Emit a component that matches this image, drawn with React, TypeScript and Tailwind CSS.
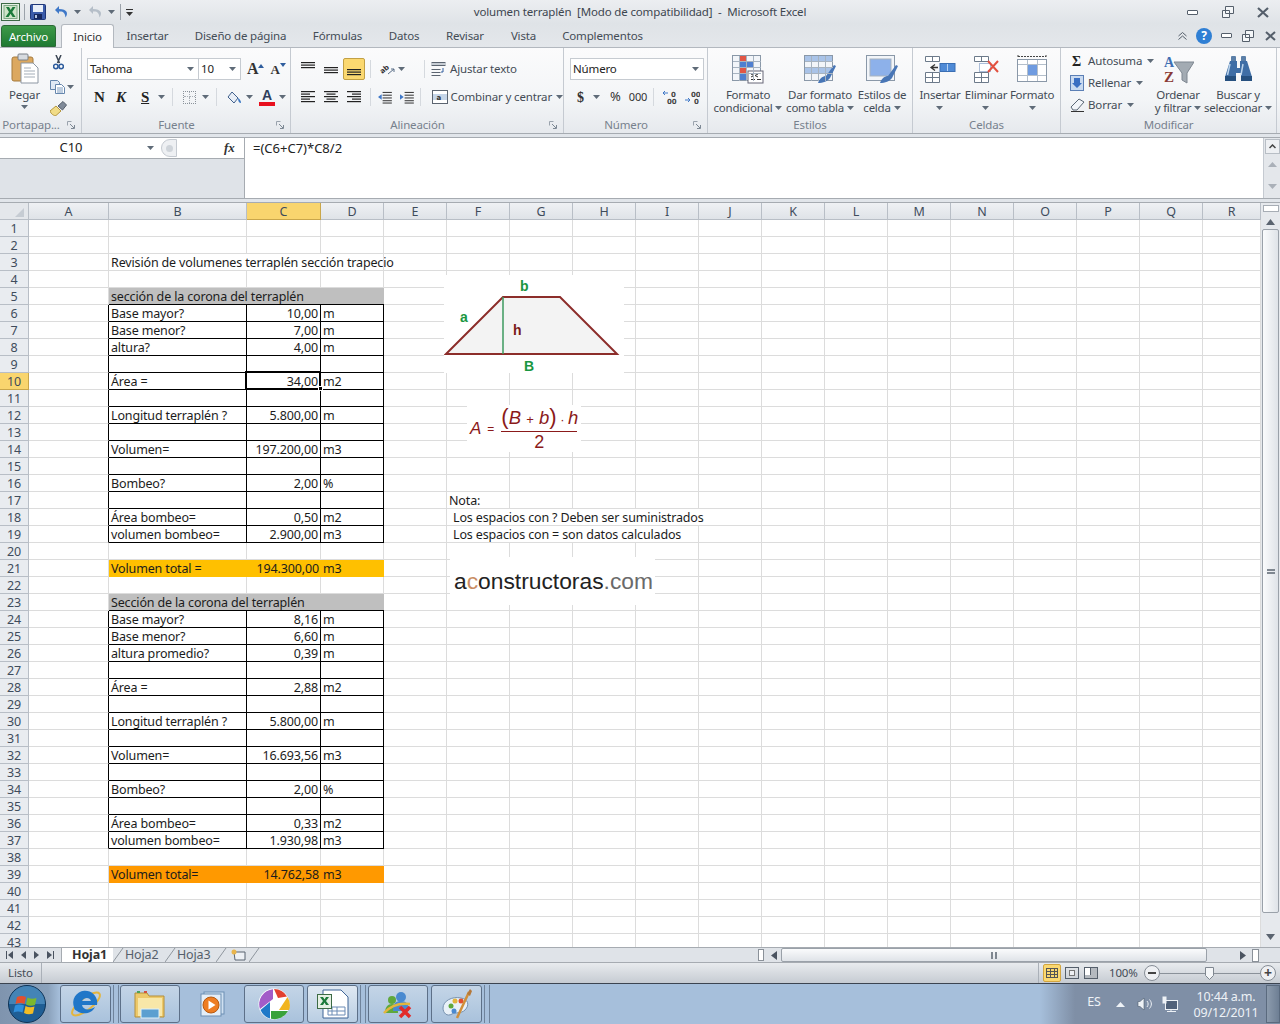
import type { ReactNode } from 'react'

const ui = 'font-["Noto_Sans",sans-serif] tracking-[-0.15px]'

const columns = ['A', 'B', 'C', 'D', 'E', 'F', 'G', 'H', 'I', 'J', 'K', 'L', 'M', 'N', 'O', 'P', 'Q', 'R']
const gridCols = 'grid grid-rows-[17px] grid-cols-[29px_80px_138px_74px_63px_63px_63px_63px_63px_63px_63px_63px_63px_63px_63px_63px_63px_63px_58px]'

type RowData = { b?: string; c?: string; d?: string }

const sheetData: Record<number, RowData> = {
  5: { b: 'sección de la corona del terraplén' },
  6: { b: 'Base mayor?', c: '10,00', d: 'm' },
  7: { b: 'Base menor?', c: '7,00', d: 'm' },
  8: { b: 'altura?', c: '4,00', d: 'm' },
  10: { b: 'Área =', c: '34,00', d: 'm2' },
  12: { b: 'Longitud terraplén ?', c: '5.800,00', d: 'm' },
  14: { b: 'Volumen=', c: '197.200,00', d: 'm3' },
  16: { b: 'Bombeo?', c: '2,00', d: '%' },
  18: { b: 'Área bombeo=', c: '0,50', d: 'm2' },
  19: { b: 'volumen bombeo=', c: '2.900,00', d: 'm3' },
  21: { b: 'Volumen total =', c: '194.300,00', d: 'm3' },
  23: { b: 'Sección de la corona del terraplén' },
  24: { b: 'Base mayor?', c: '8,16', d: 'm' },
  25: { b: 'Base menor?', c: '6,60', d: 'm' },
  26: { b: 'altura promedio?', c: '0,39', d: 'm' },
  28: { b: 'Área =', c: '2,88', d: 'm2' },
  30: { b: 'Longitud terraplén ?', c: '5.800,00', d: 'm' },
  32: { b: 'Volumen=', c: '16.693,56', d: 'm3' },
  34: { b: 'Bombeo?', c: '2,00', d: '%' },
  36: { b: 'Área bombeo=', c: '0,33', d: 'm2' },
  37: { b: 'volumen bombeo=', c: '1.930,98', d: 'm3' },
  39: { b: 'Volumen total=', c: '14.762,58', d: 'm3' },
}

const notes: Record<number, { text: string; span: string[] }> = {
  3: { text: 'Revisión de volumenes terraplén sección trapecio', span: ['B', 'C', 'D'] },
  17: { text: 'Nota:', span: [] },
  18: { text: 'Los espacios con ? Deben ser suministrados', span: ['F', 'G', 'H', 'I'] },
  19: { text: 'Los espacios con = son datos calculados', span: ['F', 'G', 'H'] },
}

function Caret({ className = '' }: { className?: string }) {
  return (
    <svg width="7" height="4" viewBox="0 0 7 4" className={`shrink-0 ${className}`}>
      <path d="M0 0h7L3.500 4z" fill="#5f6b78" />
    </svg>
  )
}

function Launcher() {
  return (
    <svg width="9" height="9" viewBox="0 0 9 9" className="absolute right-[5px] bottom-[3px]">
      <path d="M0.500 0.500h4M0.500 0.500v4" stroke="#9aa3ad" fill="none" />
      <path d="M3 3l4 4M7.500 4v3.500H4" stroke="#7d8894" fill="none" />
    </svg>
  )
}

function Group({ className, label, launcher, children }: { className: string; label: string; launcher?: boolean; children: ReactNode }) {
  return (
    <div className={`${className} relative h-full shrink-0 flex flex-col border-r border-[#c5cad1]`}>
      <div className="h-[70px] shrink-0 relative">{children}</div>
      <div className={`h-[15px] leading-[13px] text-center text-[11.5px] text-[#77818d] whitespace-nowrap ${launcher ? 'pr-[19px]' : ''}`}>{label}</div>
      {launcher && <Launcher />}
    </div>
  )
}

function BigButton({ className, lines, icon, caretInline }: { className: string; lines: string[]; icon: ReactNode; caretInline?: boolean }) {
  return (
    <div className={`${className} flex flex-col items-center pt-[7px]`}>
      <div className="h-[28px] flex items-center justify-center">{icon}</div>
      <div className="mt-[5px] text-[11.5px] tracking-[-0.25px] leading-[13px] text-center text-[#444c56] whitespace-nowrap">
        <div>{lines[0]}</div>
        {caretInline ? (
          <div className="flex items-center justify-center gap-[3px]">
            {lines[1]}
            <Caret />
          </div>
        ) : (
          <div className="h-[13px] flex items-center justify-center"><Caret /></div>
        )}
      </div>
    </div>
  )
}

function AlignIcon({ top, widths, align }: { top?: number; widths: number[]; align: 'l' | 'c' | 'r' }) {
  return (
    <svg width="14" height="12" viewBox="0 0 14 12">
      {widths.map((w, i) => {
        const x = align === 'l' ? 0 : align === 'c' ? (14 - w) / 2 : 14 - w
        return <rect key={i} x={x} y={(top ?? 0) + i * 2.5} width={w} height="1.200" fill="#222" />
      })}
    </svg>
  )
}

function ExcelLogo() {
  return (
    <svg width="20" height="20" viewBox="0 0 20 20">
      <rect x="0.500" y="1.500" width="18" height="17" fill="#e6f0e4" stroke="#3d6b45" />
      <rect x="3" y="3.500" width="13" height="13" fill="#cfe4c8" stroke="#7fa886" />
      <path d="M5 5h3l1.700 3L11.500 5h3l-3.300 5 3.400 5h-3l-2-3.200L7.500 15h-3l3.500-5z" fill="#1c7a3a" />
    </svg>
  )
}

function SaveIcon() {
  return (
    <svg width="16" height="16" viewBox="0 0 16 16">
      <rect x="0.500" y="0.500" width="15" height="15" rx="1" fill="#3b5ba9" stroke="#1f3779" />
      <rect x="3" y="1" width="10" height="7" fill="#e8eef8" />
      <rect x="4" y="10" width="8" height="5" fill="#15265c" />
      <rect x="5" y="11" width="2" height="3" fill="#b4c4e4" />
    </svg>
  )
}

function UndoIcon({ color }: { color: string }) {
  return (
    <svg width="16" height="14" viewBox="0 0 16 14">
      <path d="M5 1L1 5l4 4V6.500c4-.5 6 1 6.500 6 3-4 2-8.500-6.500-8.500z" fill={color} />
    </svg>
  )
}

function ClipboardIcon() {
  return (
    <svg width="28" height="31" viewBox="0 0 28 31">
      <rect x="1" y="4" width="21" height="24" rx="2" fill="#dca85f" stroke="#a57a3d" />
      <rect x="7" y="1" width="10" height="6" rx="1" fill="#d7dbe0" stroke="#7b8087" />
      <path d="M10 10h12l5 5v15H10z" fill="#fff" stroke="#8d97a3" />
      <path d="M13 15h7M13 18h11M13 21h11M13 24h11" stroke="#a3adb8" />
    </svg>
  )
}

function ScissorsIcon() {
  return (
    <svg width="11" height="15" viewBox="0 0 11 15">
      <path d="M3 0l3.500 8M8 0L4.500 8" stroke="#3c4654" strokeWidth="1.500" />
      <circle cx="2.800" cy="11.500" r="2.200" fill="none" stroke="#2f5d9e" strokeWidth="1.600" />
      <circle cx="8.200" cy="11.500" r="2.200" fill="none" stroke="#2f5d9e" strokeWidth="1.600" />
    </svg>
  )
}

function CopyIcon() {
  return (
    <svg width="15" height="14" viewBox="0 0 15 14">
      <path d="M0.500 0.500h7l2 2v7h-9z" fill="#dfe9f5" stroke="#6586ad" />
      <path d="M5.500 4.500h6l3 3v6h-9z" fill="#fff" stroke="#6586ad" />
      <path d="M7 8h6M7 10h6M7 12h6" stroke="#7d9cc0" />
    </svg>
  )
}

function BrushIcon() {
  return (
    <svg width="17" height="15" viewBox="0 0 17 15">
      <path d="M0 10l6-5 5 5-5 4.500C4 15 1 13 0 10z" fill="#f1dc87" stroke="#b4973f" />
      <path d="M8 5l5-4.500 3.500 3.500-4 5z" fill="#7f8a99" stroke="#555e6b" />
    </svg>
  )
}

function FontGrow({ small, up }: { small?: boolean; up: boolean }) {
  return (
    <div className="relative flex items-end">
      <span className={`font-["Liberation_Serif",serif] font-bold leading-none text-[#333] ${small ? 'text-[13px]' : 'text-[16px]'}`}>A</span>
      <svg width="6" height="4" viewBox="0 0 6 4" className="mb-[9px]">
        <path d={up ? 'M0 4h6L3 0z' : 'M0 0h6L3 4z'} fill="#2f5d9e" />
      </svg>
    </div>
  )
}

function GridTable({ fill }: { fill: ReactNode }) {
  return (
    <svg width="32" height="29" viewBox="0 0 32 29">
      <rect x="0.500" y="0.500" width="28" height="25" fill="#f2f5f9" stroke="#8a98a8" />
      {fill}
      <path d="M7.500 1v25M14.500 1v25M21.500 1v25M1 6.500h28M1 12.500h28M1 18.500h28" stroke="#a7b3c0" fill="none" />
    </svg>
  )
}

function ConditionalIcon() {
  return (
    <GridTable
      fill={
        <>
          <rect x="8" y="1" width="6" height="6" fill="#e25645" />
          <rect x="8" y="7" width="14" height="6" fill="#4f7fd0" />
          <rect x="8" y="13" width="6" height="6" fill="#e25645" />
          <rect x="8" y="19" width="6" height="6" fill="#4f7fd0" />
          <rect x="16" y="16" width="15" height="12" fill="#fff" stroke="#667" />
          <path d="M19 19l3 1.500-3 1.500M26 19l-3 1.500 3 1.500M19 24.500h4M25 24.500h4" stroke="#333" fill="none" />
        </>
      }
    />
  )
}

function BrushOverlay() {
  return <path d="M14 28c2-6 6-7 8-7l8-11 2 1-6 12c-2 3-7 5-12 5z" fill="#4876b6" />
}

function TableFormatIcon() {
  return (
    <GridTable
      fill={
        <>
          <rect x="1" y="1" width="27" height="5" fill="#a9c3e8" />
          <rect x="1" y="13" width="27" height="6" fill="#a9c3e8" />
          <BrushOverlay />
        </>
      }
    />
  )
}

function CellStyleIcon() {
  return (
    <svg width="32" height="29" viewBox="0 0 32 29">
      <rect x="0.500" y="0.500" width="28" height="25" fill="#f2f5f9" stroke="#8a98a8" />
      <rect x="4" y="4" width="21" height="17" fill="#8db1ea" stroke="#a7b3c0" />
      <BrushOverlay />
    </svg>
  )
}

function InsertCellsIcon() {
  return (
    <svg width="31" height="27" viewBox="0 0 31 27">
      <path d="M0.500 0.500h14v5h-14zM0.500 16.500h14v10h-14zM0.500 21.500h14M7.500 0.500v5M7.500 16.500v10" fill="#fff" stroke="#6c7a8a" />
      <rect x="15" y="7.500" width="15" height="8" fill="#4f8ad6" stroke="#3a6eb3" />
      <path d="M22.500 8v7" stroke="#b7d2f2" />
      <path d="M6 11.500h7M10 8.500l-4 3 4 3" stroke="#333" strokeWidth="1.300" fill="none" />
    </svg>
  )
}

function DeleteCellsIcon() {
  return (
    <svg width="25" height="27" viewBox="0 0 25 27">
      <path d="M0.500 0.500h14v5h-14zM0.500 16.500h14v10h-14zM0.500 21.500h14M7.500 0.500v5M7.500 16.500v10" fill="#fff" stroke="#6c7a8a" />
      <rect x="5.500" y="7.500" width="11" height="8" fill="#fff" stroke="#5b7fb5" strokeDasharray="1 1" />
      <path d="M14 5l10 11M24 5L14 16" stroke="#e2503f" strokeWidth="2" />
    </svg>
  )
}

function FormatCellsIcon() {
  return (
    <svg width="30" height="29" viewBox="0 0 30 29">
      <path d="M1 1.500h28M1 0v3M29 0v3" stroke="#444" strokeDasharray="2 1" />
      <rect x="0.500" y="4.500" width="29" height="22" fill="#fff" stroke="#8a98a8" />
      <rect x="10" y="9" width="10" height="11" fill="#6f9be0" />
      <path d="M10.500 5v21M20.500 5v21M1 9.500h28M1 20.500h28" stroke="#b4bfcb" fill="none" />
    </svg>
  )
}

function FunnelIcon() {
  return (
    <svg width="31" height="29" viewBox="0 0 31 29">
      <path d="M11 7h20l-7 11v10l-5-3v-7z" fill="#a3abb3" stroke="#7e8791" />
      <text x="1" y="12" fontFamily="Liberation Serif" fontWeight="700" fontSize="14" fill="#3f6fb3">A</text>
      <text x="1" y="27" fontFamily="Liberation Serif" fontWeight="700" fontSize="15" fill="#8a3a35">Z</text>
    </svg>
  )
}

function BinocularsIcon() {
  return (
    <svg width="29" height="26" viewBox="0 0 29 26">
      <rect x="7" y="0" width="5" height="6" rx="1" fill="#5b7fa8" />
      <rect x="17" y="0" width="5" height="6" rx="1" fill="#5b7fa8" />
      <path d="M6 5h7v7h3V5h7l5 16v4H17v-8h-5v8H1v-4z" fill="#3f6ea6" />
      <path d="M1 20h11v5H1zM17 20h11v5H17z" fill="#26507f" />
      <path d="M6 8L3.500 19M19 8l-2 11" stroke="#bcd4ec" strokeWidth="1.500" />
    </svg>
  )
}

function SmallCmd({ icon, label, className }: { icon: ReactNode; label: string; className?: string }) {
  return (
    <div className={`flex items-center h-[22px] whitespace-nowrap text-[#444c56] text-[11.5px] ${className ?? ''}`}>
      <div className="w-[18px] shrink-0 flex items-center">{icon}</div>
      <span className="shrink-0">{label}</span>
      <Caret className="ml-[5px]" />
    </div>
  )
}

function Ribbon() {
  return (
    <div className="h-[86px] shrink-0 flex bg-[linear-gradient(180deg,#fbfbfc_0%,#f3f5f7_60%,#e6e9ed_100%)] border-b border-[#a6abb1]">
      <Group className="w-[82px]" label="Portapap..." launcher>
        <div className="flex h-full">
          <div className="w-[50px] flex flex-col items-center pt-[5px] pr-[1px]">
            <ClipboardIcon />
            <span className="text-[11.5px] leading-[13px] mt-[4px] text-[#444c56]">Pegar</span>
            <Caret className="mt-[4px]" />
          </div>
          <div className="flex flex-col pt-[7px]">
            <div className="h-[18px] pl-[3px]"><ScissorsIcon /></div>
            <div className="h-[24px] flex items-center gap-[2px] mt-[2px]"><CopyIcon /><Caret /></div>
            <div className="mt-[2px]"><BrushIcon /></div>
          </div>
        </div>
      </Group>

      <Group className="w-[209px]" label="Fuente" launcher>
        <div className="pt-[10px] pl-[5px]">
          <div className="flex items-center h-[22px]">
            <div className="w-[112px] h-[22px] bg-white border border-[#c6cbd1] flex items-center justify-between px-[2px] text-[11.5px] text-[#222]">
              Tahoma<Caret className="mr-[2px]" />
            </div>
            <div className="w-[43px] h-[22px] -ml-px bg-white border border-[#c6cbd1] flex items-center justify-between px-[2px] text-[11.5px] text-[#222]">
              10<Caret className="mr-[2px]" />
            </div>
            <div className="ml-[6px]"><FontGrow up /></div>
            <div className="ml-[6px]"><FontGrow small up={false} /></div>
          </div>
          <div className="flex items-center h-[22px] mt-[6px]">
            <span className='ml-[7px] w-[12px] font-["Liberation_Serif",serif] font-bold text-[15px] text-[#222]'>N</span>
            <span className='ml-[10px] w-[14px] font-["Liberation_Serif",serif] font-bold italic text-[15px] text-[#222]'>K</span>
            <span className='ml-[11px] w-[11px] font-["Liberation_Serif",serif] font-bold underline text-[15px] text-[#222]'>S</span>
            <Caret className="ml-[6px]" />
            <div className="ml-[7px] w-px h-[18px] bg-[#d5d9de]" />
            <div className="ml-[10px] w-[13px] h-[13px] border border-dotted border-[#8b929a] grid grid-cols-2 grid-rows-2">
              <div className="border-r border-b border-dotted border-[#aab0b7]" />
              <div className="border-b border-dotted border-[#aab0b7]" />
              <div className="border-r border-dotted border-[#aab0b7]" />
            </div>
            <Caret className="ml-[6px]" />
            <div className="ml-[7px] w-px h-[18px] bg-[#d5d9de]" />
            <svg width="15" height="13" viewBox="0 0 15 13" className="ml-[10px]">
              <path d="M5 1l6 6-4 5-6-6z" fill="#e8eef6" stroke="#3f5f8c" />
              <path d="M11 7c2 1 3 3 3 5-2 0-3-2-3-5z" fill="#3c78c4" />
            </svg>
            <Caret className="ml-[4px]" />
            <div className="ml-[6px] w-[16px] flex flex-col items-center">
              <span className='font-["Liberation_Sans",sans-serif] font-bold text-[14px] leading-[13px] text-[#2e3e5c]'>A</span>
              <div className="w-[16px] h-[4px] bg-[#e8101e]" />
            </div>
            <Caret className="ml-[4px]" />
          </div>
        </div>
      </Group>

      <Group className="w-[273px]" label="Alineación" launcher>
        <div className="pt-[10px] pl-[10px]">
          <div className="flex items-center h-[22px]">
            <div className="w-[14px] -mt-[3px]"><AlignIcon widths={[14, 14, 14]} align="c" /></div>
            <div className="ml-[9px] w-[14px] mt-[3px]"><AlignIcon top={2} widths={[14, 14, 14]} align="c" /></div>
            <div className="ml-[5px] w-[22px] h-[22px] rounded-[2px] border border-[#c2a045] bg-[#fbd870] flex items-center justify-center">
              <div className="mt-[6px]"><AlignIcon top={3} widths={[14, 14, 14]} align="c" /></div>
            </div>
            <div className="ml-[5px] w-px h-[18px] bg-[#d5d9de]" />
            <svg width="18" height="16" viewBox="0 0 18 16" className="ml-[8px] overflow-visible">
              <text x="1" y="11" fontSize="7" fontWeight="700" fontFamily="DejaVu Sans" fill="#333" transform="rotate(-40 5 9)">ab</text>
              <path d="M9 13l6-5M15 8h-3M15 8v3" stroke="#5b6f88" fill="none" />
            </svg>
            <Caret className="ml-[1px]" />
            <div className="ml-[19px] w-px h-[18px] bg-[#d5d9de]" />
            <svg width="16" height="14" viewBox="0 0 16 14" className="ml-[6px]">
              <path d="M0.500 0.500h14M0.500 3.500h14M0.500 7.500h9M0.500 10.500h9M0.500 13.500h9" stroke="#5b6470" fill="none" />
              <rect x="0" y="1" width="15" height="2" fill="#c7cdd4" />
              <path d="M12 6v4h-2" stroke="#2f5d9e" fill="none" />
            </svg>
            <span className="ml-[3px] text-[11.5px] text-[#444c56] whitespace-nowrap">Ajustar texto</span>
          </div>
          <div className="flex items-center h-[22px] mt-[6px]">
            <div className="w-[14px]"><AlignIcon widths={[14, 9, 14, 9, 14]} align="l" /></div>
            <div className="ml-[9px] w-[14px]"><AlignIcon widths={[14, 9, 14, 9, 14]} align="c" /></div>
            <div className="ml-[9px] w-[14px]"><AlignIcon widths={[14, 9, 14, 9, 14]} align="r" /></div>
            <div className="ml-[9px] w-px h-[18px] bg-[#d5d9de]" />
            <svg width="15" height="13" viewBox="0 0 15 13" className="ml-[7px]">
              <path d="M5 1h10M5 4h10M5 7h10M5 10h10M5 12.500h10" stroke="#222" fill="none" />
              <path d="M4 3L0 6l4 3z" fill="#3f78c8" />
            </svg>
            <svg width="15" height="13" viewBox="0 0 15 13" className="ml-[8px]">
              <path d="M5 1h10M5 4h10M5 7h10M5 10h10M5 12.500h10" stroke="#222" fill="none" />
              <path d="M0 3l4 3-4 3z" fill="#3f78c8" />
            </svg>
            <div className="ml-[6px] w-px h-[18px] bg-[#d5d9de]" />
            <svg width="16" height="14" viewBox="0 0 16 14" className="ml-[11px] shrink-0">
              <rect x="0.500" y="0.500" width="15" height="13" fill="#fff" stroke="#5b6470" />
              <rect x="1" y="4" width="14" height="6" fill="#c5d5e8" />
              <text x="4.500" y="9.500" fontSize="7" fontFamily="DejaVu Sans" fontWeight="700" fill="#333">a</text>
            </svg>
            <span className="ml-[3px] text-[11.5px] text-[#444c56] whitespace-nowrap">Combinar y centrar</span>
            <Caret className="ml-[4px]" />
          </div>
        </div>
      </Group>

      <Group className="w-[144px]" label="Número" launcher>
        <div className="pt-[10px] pl-[6px]">
          <div className="w-[134px] h-[22px] bg-white border border-[#c6cbd1] flex items-center justify-between px-[2px] text-[11.5px] text-[#222]">
            Número<Caret className="mr-[2px]" />
          </div>
          <div className="flex items-center h-[22px] mt-[6px] text-[#333]">
            <span className='ml-[7px] w-[9px] font-["Liberation_Serif",serif] font-bold text-[14px]'>$</span>
            <Caret className="ml-[7px]" />
            <span className="ml-[10px] w-[14px] text-[13px]">%</span>
            <span className="ml-[4px] w-[20px] text-[11px] text-center">000</span>
            <div className="ml-[5px] w-px h-[18px] bg-[#d5d9de]" />
            <svg width="17" height="14" viewBox="0 0 17 14" className="ml-[8px]">
              <path d="M6 3H1M3 1L1 3l2 2" stroke="#3f78c8" fill="none" />
              <text x="9" y="6.500" fontSize="7" fontWeight="700" fontFamily="DejaVu Sans" fill="#444">0</text>
              <text x="5" y="13.500" fontSize="7" fontWeight="700" fontFamily="DejaVu Sans" fill="#444">00</text>
            </svg>
            <svg width="16" height="14" viewBox="0 0 16 14" className="ml-[5px]">
              <path d="M1 10h5M4 8l2 2-2 2" stroke="#3f78c8" fill="none" />
              <text x="7" y="6.500" fontSize="7" fontWeight="700" fontFamily="DejaVu Sans" fill="#444">00</text>
              <text x="10" y="13.500" fontSize="7" fontWeight="700" fontFamily="DejaVu Sans" fill="#444">0</text>
            </svg>
          </div>
        </div>
      </Group>

      <Group className="w-[205px]" label="Estilos">
        <div className="flex h-full">
          <BigButton className="w-[80px]" lines={['Formato', 'condicional']} icon={<ConditionalIcon />} caretInline />
          <BigButton className="w-[64px]" lines={['Dar formato', 'como tabla']} icon={<TableFormatIcon />} caretInline />
          <BigButton className="w-[60px]" lines={['Estilos de', 'celda']} icon={<CellStyleIcon />} caretInline />
        </div>
      </Group>

      <Group className="w-[148px]" label="Celdas">
        <div className="flex h-full pl-[4px]">
          <BigButton className="w-[46px]" lines={['Insertar']} icon={<InsertCellsIcon />} />
          <BigButton className="w-[46px]" lines={['Eliminar']} icon={<DeleteCellsIcon />} />
          <BigButton className="w-[46px]" lines={['Formato']} icon={<FormatCellsIcon />} />
        </div>
      </Group>

      <Group className="w-[216px]" label="Modificar">
        <div className="flex h-full">
          <div className="w-[88px] pt-[2px] pl-[9px] shrink-0">
            <SmallCmd
              icon={<span className='font-["Liberation_Serif",serif] font-bold text-[14px] text-[#222] pl-[2px]'>Σ</span>}
              label="Autosuma"
            />
            <SmallCmd
              icon={
                <svg width="14" height="16" viewBox="0 0 14 16">
                  <rect x="0.500" y="0.500" width="13" height="15" fill="#c9daf0" stroke="#5b7fb5" />
                  <path d="M4 3h6v5h2l-5 5-5-5h2z" fill="#3a6fc2" />
                </svg>
              }
              label="Rellenar"
            />
            <SmallCmd
              icon={
                <svg width="15" height="14" viewBox="0 0 15 14">
                  <path d="M1 9l8-8 5 3-7 8H3z" fill="#f2f5f9" stroke="#5a6775" />
                  <path d="M1 13.500h13" stroke="#333" />
                </svg>
              }
              label="Borrar"
            />
          </div>
          <BigButton className="w-[58px]" lines={['Ordenar', 'y filtrar']} icon={<FunnelIcon />} caretInline />
          <BigButton className="w-[62px]" lines={['Buscar y', 'seleccionar']} icon={<BinocularsIcon />} caretInline />
        </div>
      </Group>
    </div>
  )
}

function FormulaBar() {
  return (
    <div className="h-[62px] mt-[3px] shrink-0 flex border-y border-[#a6abb1] bg-white text-[#222] tracking-normal">
      <div className="w-[245px] shrink-0 border-r border-[#a6abb1] flex flex-col">
        <div className="h-[21px] flex items-center border-b border-[#a6abb1] bg-white text-[13px]">
          <div className="w-[142px] text-center">C10</div>
          <Caret className="ml-[5px]" />
          <div className="ml-[7px] w-[16px] h-[18px] rounded-l-full border border-[#c5cad1] bg-[#eef0f3] flex items-center justify-center">
            <div className="w-[7px] h-[7px] rounded-full bg-[#cfd4da]" />
          </div>
          <span className='ml-[47px] font-["Liberation_Serif",serif] italic font-bold text-[13px] text-[#333]'>fx</span>
        </div>
        <div className="flex-1 bg-[#dfe3e8]" />
      </div>
      <div className="flex-1 pl-[8px] pt-[2px] text-[13px] leading-[17px]">=(C6+C7)*C8/2</div>
      <div className="w-[17px] shrink-0 bg-[#e4e7eb] border-l border-[#c5cad1] flex flex-col items-center">
        <div className="w-[15px] h-[15px] mt-[1px] bg-[#eef0f3] border border-[#b8bec5] flex items-center justify-center">
          <svg width="7" height="5" viewBox="0 0 7 5"><path d="M0.500 4l3-3 3 3" stroke="#444" strokeWidth="1.500" fill="none" /></svg>
        </div>
        <svg width="9" height="5" viewBox="0 0 9 5" className="mt-[8px]"><path d="M0 5h9L4.500 0z" fill="#aab0b8" /></svg>
        <svg width="9" height="5" viewBox="0 0 9 5" className="mt-[17px]"><path d="M0 0h9L4.500 5z" fill="#aab0b8" /></svg>
      </div>
    </div>
  )
}

function tableRow(r: number) {
  return (r >= 6 && r <= 19) || (r >= 24 && r <= 37)
}

function SheetRow({ r }: { r: number }) {
  const data = sheetData[r] ?? {}
  const note = notes[r]
  const isHead = r === 5 || r === 23
  const fill = isHead ? 'bg-[#bfbfbf]' : r === 21 ? 'bg-[#ffc000]' : r === 39 ? 'bg-[#ff9900]' : ''
  const boxed = tableRow(r)
  const bottomDark = boxed || isHead

  return (
    <div className={`${gridCols} h-[17px] text-[12.5px] leading-[18px] text-[#1c1c1c]`}>
      <div className={`border-r border-b text-center text-[#3f4c5c] ${r === 10 ? 'bg-[#f9d56e] border-[#c9a64a]' : 'bg-[#e9ecf0] border-[#b8bec6]'}`}>{r}</div>
      {columns.map((col) => {
        const overflow = note?.span.includes(col)
        let cls = 'border-r border-b border-[#dcdcdc] whitespace-nowrap'
        if (col === 'A' && boxed) cls = 'border-b border-b-[#dcdcdc] border-r border-r-black'
        if (['B', 'C', 'D'].includes(col)) {
          if (fill) cls = `${fill} whitespace-nowrap ${bottomDark ? 'border-b border-black' : ''}`
          else if (bottomDark) cls = 'border-r border-b border-black whitespace-nowrap'
        }
        if (overflow) cls = 'border-b border-[#dcdcdc] whitespace-nowrap'
        if (r === 3 && col === 'D') cls = 'border-r border-b border-[#dcdcdc] whitespace-nowrap'

        let content: ReactNode = null
        if (col === 'B' && data.b) content = <span className="relative z-10 pl-[2px]">{data.b}</span>
        if (col === 'C' && data.c) content = <div className="text-right pr-[2px]">{data.c}</div>
        if (col === 'D' && data.d) content = <span className="pl-[2px]">{data.d}</span>
        if (r === 3 && col === 'B') content = <span className="pl-[2px]">{note.text}</span>
        if (r === 17 && col === 'F') content = <span className="pl-[2px]">{note.text}</span>
        if ((r === 18 || r === 19) && col === 'F') content = <span className="pl-[6px]">{note.text}</span>

        return <div key={col} className={cls}>{content}</div>
      })}
    </div>
  )
}

function TrapezoidPicture() {
  return (
    <div className="absolute left-[444px] top-[72px] w-[180px] h-[98px] bg-white tracking-normal">
      <svg width="180" height="98" viewBox="0 0 180 98">
        <path d="M2 79L59 22h57l57 57z" fill="#f3f3f3" stroke="#8c2d2a" strokeWidth="2" />
        <path d="M59 22v57" stroke="#3c9a5f" strokeWidth="1.500" />
        <g fontFamily="Liberation Sans" fontWeight="700" fontSize="14">
          <text x="76" y="16" fill="#1a9641">b</text>
          <text x="16" y="47" fill="#1a9641">a</text>
          <text x="80" y="96" fill="#1a9641">B</text>
          <text x="69" y="60" fill="#7a1a18">h</text>
        </g>
      </svg>
    </div>
  )
}

function FormulaPicture() {
  return (
    <div className='absolute left-[467px] top-[202px] w-[114px] h-[47px] bg-white text-[#8b1a1a] font-["Liberation_Sans",sans-serif] tracking-normal flex items-center'>
      <span className="ml-[3px] italic text-[17px]">A</span>
      <span className="ml-[6px] text-[12px]">=</span>
      <div className="ml-[7px] w-[76px] flex flex-col items-center">
        <div className="text-[18.5px] leading-[23px] italic whitespace-nowrap border-b border-[#8b1a1a] w-full text-center">
          <span className="not-italic text-[22px]">(</span>B <span className="not-italic text-[13px]">+</span> b<span className="not-italic text-[22px]">)</span><span className="not-italic text-[13px]"> · </span>h
        </div>
        <div className="text-[18px] leading-[20px]">2</div>
      </div>
    </div>
  )
}

function LogoPicture() {
  return (
    <div className='absolute left-[450px] top-[354px] w-[205px] h-[48px] bg-white flex items-center pl-[4px] font-["Liberation_Sans",sans-serif] tracking-normal text-[22.8px] text-[#222]'>
      a<span className="text-[#c98d63]">c</span>onstructoras<span className="text-[#6a6a6a] font-light">.com</span>
    </div>
  )
}

function VerticalScroll() {
  return (
    <div className="w-[19px] shrink-0 bg-[#e6e9ed] flex flex-col items-center">
      <div className="w-[16px] h-[7px] mt-[2px] bg-white border border-[#a7adb5]" />
      <svg width="9" height="6" viewBox="0 0 9 6" className="mt-[7px]"><path d="M0 6h9L4.500 0z" fill="#5b6470" /></svg>
      <div className="w-[17px] h-[684px] mt-[4px] rounded-[2px] border border-[#9aa1a9] bg-[linear-gradient(90deg,#fafbfc,#dfe3e8)] flex items-center justify-center">
        <div className="w-[8px] h-[5px] border-y-2 border-double border-[#7f8790]" />
      </div>
      <svg width="9" height="6" viewBox="0 0 9 6" className="mt-[21px]"><path d="M0 0h9L4.500 6z" fill="#5b6470" /></svg>
    </div>
  )
}

function Sheet() {
  const rows = Array.from({ length: 43 }, (_, i) => i + 1)
  return (
    <div className="h-[745px] mt-[3px] shrink-0 flex border-t border-[#a6abb1] bg-white overflow-hidden">
      <div className="w-[1261px] shrink-0 relative overflow-hidden">
        <div className={`${gridCols} h-[17px] text-[12.5px] leading-[18px] text-[#3f4c5c] text-center`}>
          <div className="bg-[#e4e7eb] border-r border-b border-[#b8bec6] relative">
            <svg width="9" height="9" viewBox="0 0 9 9" className="absolute right-[4px] bottom-[2px]"><path d="M9 0v9H0z" fill="#c6ccd3" /></svg>
          </div>
          {columns.map((c) => (
            <div key={c} className={c === 'C' ? 'bg-[#f9d56e] border-r border-b border-[#c9a64a]' : 'bg-[linear-gradient(180deg,#eff1f4,#dfe3e8)] border-r border-b border-[#b8bec6]'}>{c}</div>
          ))}
        </div>
        {rows.map((r) => <SheetRow key={r} r={r} />)}

        <div className="absolute left-[245px] top-[168px] w-[76px] h-[19px] border-2 border-black pointer-events-none" />
        <div className="absolute left-[318px] top-[183px] w-[5px] h-[5px] bg-black border border-white" />

        <TrapezoidPicture />
        <FormulaPicture />
        <LogoPicture />
      </div>
      <VerticalScroll />
    </div>
  )
}

function Slant() {
  return (
    <svg width="12" height="14" viewBox="0 0 12 14" className="shrink-0">
      <path d="M0 14L10 0" stroke="#8f969e" fill="none" />
    </svg>
  )
}

function SheetTabs() {
  return (
    <div className="h-[16px] shrink-0 flex items-center bg-[#dfe3e8] border-y border-[#a6abb1] text-[12.5px] text-[#555f6b] relative">
      <div className="w-[62px] h-full flex items-center gap-[8px] pl-[6px] border-r border-[#a6abb1]">
        <svg width="7" height="8" viewBox="0 0 7 8"><path d="M0 0h1v8H0zM7 0v8L2 4z" fill="#4a5360" /></svg>
        <svg width="5" height="8" viewBox="0 0 5 8"><path d="M5 0v8L0 4z" fill="#4a5360" /></svg>
        <svg width="5" height="8" viewBox="0 0 5 8"><path d="M0 0v8l5-4z" fill="#4a5360" /></svg>
        <svg width="7" height="8" viewBox="0 0 7 8"><path d="M6 0h1v8H6zM0 0v8l5-4z" fill="#4a5360" /></svg>
      </div>
      <div className="w-[51px] h-full bg-white text-center pl-[4px] font-bold text-[#333] leading-[14px]">Hoja1</div>
      <Slant />
      <div className="w-[40px] leading-[14px]">Hoja2</div>
      <Slant />
      <div className="w-[39px] leading-[14px]">Hoja3</div>
      <Slant />
      <svg width="15" height="12" viewBox="0 0 15 12" className="ml-[3px] shrink-0">
        <path d="M3 3h11v8H4z" fill="#eef1f5" stroke="#5b6470" />
        <circle cx="3" cy="3" r="2.500" fill="#e9b54c" />
      </svg>
      <div className="ml-[3px]"><Slant /></div>
      <div className="ml-auto flex items-center h-full">
        <div className="w-[6px] h-[12px] border border-[#8a9199] bg-white" />
        <svg width="6" height="9" viewBox="0 0 6 9" className="ml-[7px]"><path d="M6 0v9L0 4.500z" fill="#4a5360" /></svg>
        <div className="ml-[4px] w-[426px] h-[14px] border border-[#9aa1a9] rounded-[2px] bg-[linear-gradient(180deg,#fafbfc,#dfe3e8)] flex items-center justify-center">
          <div className="w-[6px] h-[7px] border-x-2 border-double border-[#7f8790]" />
        </div>
        <svg width="6" height="9" viewBox="0 0 6 9" className="ml-[33px]"><path d="M0 0v9l6-4.500z" fill="#4a5360" /></svg>
        <div className="ml-[6px] w-[7px] h-[13px] border border-[#8a9199] bg-white" />
        <div className="w-[21px]" />
      </div>
    </div>
  )
}

function StatusBar() {
  return (
    <div className="h-[21px] shrink-0 flex items-center bg-[linear-gradient(180deg,#e8ebee,#c6cbd2)] border-b border-[#3c4450] text-[11.5px] text-[#444c56]">
      <div className="w-[42px] h-full flex items-center pl-[8px] border-r border-[#aab0b8]">Listo</div>
      <div className="ml-auto flex items-center h-full">
        <div className="w-px h-full bg-[#aab0b8] mr-[4px]" />
        <div className="w-[18px] h-[18px] rounded-[2px] bg-[#fbd870] border border-[#d2a540] flex items-center justify-center">
          <div className="w-[12px] h-[10px] bg-[linear-gradient(#555_1px,transparent_1px),linear-gradient(90deg,#555_1px,transparent_1px)] bg-[size:4px_3px] border-r border-b border-[#555]" />
        </div>
        <div className="ml-[4px] w-[14px] h-[12px] border border-[#555f6b] flex items-center justify-center">
          <div className="w-[6px] h-[6px] bg-[#eef0f3] border border-[#777]" />
        </div>
        <div className="ml-[5px] w-[14px] h-[12px] border border-[#555f6b] bg-[#b4b9bf] flex">
          <div className="w-[6px] h-[7px] bg-white border-r border-[#555f6b]" />
        </div>
        <span className="ml-[11px] w-[30px]">100%</span>
        <div className="ml-[5px] w-[16px] h-[16px] rounded-full border border-[#868d96] bg-[#eef0f3] flex items-center justify-center">
          <div className="w-[8px] h-[2px] bg-[#444]" />
        </div>
        <div className="w-[100px] h-px bg-[#8a9199] relative">
          <svg width="9" height="13" viewBox="0 0 9 13" className="absolute left-[45px] -top-[6px]">
            <path d="M0.500 0.500h8v8l-4 4-4-4z" fill="#f4f6f8" stroke="#7f8790" />
          </svg>
        </div>
        <div className="w-[16px] h-[16px] rounded-full border border-[#868d96] bg-[#eef0f3] flex items-center justify-center text-[14px] leading-[14px] font-bold text-[#444]">+</div>
        <div className="w-[4px]" />
      </div>
    </div>
  )
}

function TaskButton({ className, children, active }: { className: string; children?: ReactNode; active?: boolean }) {
  return (
    <div className={`${className} h-[38px] mt-[1px] shrink-0 rounded-[3px] border border-[#5d7088] flex items-center justify-center ${active ? 'bg-[linear-gradient(180deg,#dfe8f2,#b9cee3)]' : 'bg-[linear-gradient(180deg,#c4d5e7,#a9c2dc)]'}`}>
      {children}
    </div>
  )
}

function Stack() {
  return <div className="w-[6px] h-[38px] mt-[1px] shrink-0 border-x border-[#6f839b] ml-[2px]" />
}

function Taskbar() {
  return (
    <div className="flex-1 flex items-start bg-[linear-gradient(90deg,#7f94ae_0,#8aa1bb_48px,#a6bfdb_60px,#a6bfdb_1040px,#7f8fa6_1075px,#7f8fa6_100%)] text-[#eef2f6] text-[12.5px]">
      <div className="w-[60px] h-full shrink-0 flex items-center justify-center pr-[6px]">
        <svg width="38" height="38" viewBox="0 0 38 38">
          <circle cx="19" cy="19" r="18.500" fill="#1f5e94" stroke="#0e3356" />
          <path d="M1 19a18 18 0 0 1 36 0z" fill="#6aa9d8" opacity=".5" />
          <path d="M9 12c3-1.500 6-1.500 9 0l-1.500 7c-3-1.500-6-1.500-9 0z" fill="#e2502f" />
          <path d="M19.500 12.500c3 1.500 6 1.500 9 .5l-1.500 7c-3 1-6 1-9-.5z" fill="#7db82e" />
          <path d="M7 20.500c3-1.500 6-1.500 9 0l-1.500 7c-3-1.500-6-1.500-9 0z" fill="#2f8fdc" />
          <path d="M17.500 21c3 1.500 6 1.500 9 .5l-1.500 7c-3 1-6 1-9-.5z" fill="#f2bc25" />
        </svg>
      </div>
      <TaskButton className="w-[51px]">
        <svg width="34" height="32" viewBox="0 0 34 32">
          <ellipse cx="17" cy="16" rx="17" ry="6" transform="rotate(-38 17 16)" fill="none" stroke="#e3b53d" strokeWidth="2" />
          <path d="M5 19a12 12 0 1 1 23-2H13c1 5 7 6 13 2-3 7-13 8-18 4-2-1-3-2-3-4zM13 13h9c-1-4-7-4-9 0z" fill="#1f76c8" fillRule="evenodd" />
        </svg>
      </TaskButton>
      <Stack />
      <TaskButton className="w-[60px] ml-[1px]">
        <svg width="32" height="30" viewBox="0 0 32 30">
          <path d="M1 4h12l2 3h15v21H1z" fill="#edc96a" stroke="#b48f3a" />
          <rect x="3" y="2" width="3" height="2" fill="#4aa15a" />
          <rect x="10" y="2" width="3" height="2" fill="#d2503f" />
          <rect x="4" y="9" width="24" height="18" fill="#f8e7a8" />
          <path d="M7 20h18v9H7z" fill="#5c9fd0" stroke="#dff0fb" />
        </svg>
      </TaskButton>
      <div className="w-[50px] ml-[9px] h-[38px] flex items-center justify-center shrink-0">
        <svg width="28" height="28" viewBox="0 0 28 28">
          <rect x="4" y="3" width="20" height="22" fill="#cfe0f1" stroke="#6d8fb3" />
          <rect x="1" y="5" width="20" height="22" fill="#e4eef8" stroke="#6d8fb3" />
          <circle cx="11" cy="16" r="8" fill="#ee7d22" stroke="#b75a10" />
          <path d="M8.500 11.500v9l7-4.500z" fill="#fff" />
        </svg>
      </div>
      <TaskButton className="w-[60px] ml-[5px]">
        <svg width="32" height="32" viewBox="0 0 32 32">
          <circle cx="16" cy="16" r="15.500" fill="#fff" />
          <path d="M16 1A15 15 0 0 1 29 8.500L20 10z" fill="#e2402f" />
          <path d="M29.500 9A15 15 0 0 1 31 22H21z" fill="#f1b41f" />
          <path d="M30 23A15 15 0 0 1 13 30.800V23z" fill="#3aa23a" />
          <path d="M12 30.500A15 15 0 0 1 2.500 22L12 14z" fill="#1f79c8" />
          <path d="M2 21A15 15 0 0 1 15 1.200V11z" fill="#a25cc8" />
        </svg>
      </TaskButton>
      <TaskButton className="w-[51px] ml-[3px]" active>
        <svg width="32" height="30" viewBox="0 0 32 30">
          <path d="M6 1h18l7 7v21H6z" fill="#fff" stroke="#3f6596" />
          <path d="M11 18h17v8H11zM15 18v8M20 18v8M11 22h17" stroke="#6a8bb5" fill="none" />
          <rect x="0.500" y="5.500" width="14" height="14" fill="#e6f0e4" stroke="#3d6b45" />
          <path d="M3 8h3l1.500 2.500L9 8h3l-3 4 3 4H9l-1.500-2.500L6 16H3l3-4z" fill="#1c7a3a" />
        </svg>
      </TaskButton>
      <Stack />
      <TaskButton className="w-[60px] ml-[2px]">
        <svg width="32" height="30" viewBox="0 0 32 30">
          <circle cx="10" cy="11" r="4" fill="#5fa83d" />
          <path d="M3 24c0-6 3-9 7-9s6 3 6 9z" fill="#5fa83d" />
          <circle cx="19" cy="8" r="5" fill="#4a8ad0" />
          <path d="M11 22c0-8 3-10 8-10s8 3 8 10z" fill="#4a8ad0" />
          <path d="M2 24c8-9 18-10 26-9" stroke="#e3b53d" strokeWidth="2.500" fill="none" />
          <path d="M18 18l10 10M28 18L18 28" stroke="#e22a2a" strokeWidth="3.500" />
        </svg>
      </TaskButton>
      <TaskButton className="w-[51px] ml-[3px]">
        <svg width="32" height="32" viewBox="0 0 32 32">
          <path d="M2 20c0-7 9-12 18-10 7 1 9 7 4 12-4 4-10 2-13 4-5 3-9-1-9-6z" fill="#e9f1f8" stroke="#7590ae" />
          <circle cx="10" cy="18" r="2.500" fill="#5fa83d" />
          <circle cx="14" cy="13" r="2.500" fill="#e3b53d" />
          <circle cx="20" cy="13" r="2.500" fill="#e2502f" />
          <circle cx="13" cy="23" r="2.500" fill="#4a8ad0" />
          <path d="M16 30L28 4" stroke="#d08f3a" strokeWidth="2.500" />
          <path d="M26 6l3-5 2 2-2 5z" fill="#b5793a" />
        </svg>
      </TaskButton>
      <Stack />
      <div className="ml-auto flex items-center h-[40px]">
        <span className="w-[16px] text-center mr-[14px] -mt-[4px]">ES</span>
        <svg width="9" height="5" viewBox="0 0 9 5" className="mr-[12px]"><path d="M0 5h9L4.500 0z" fill="#eef2f6" /></svg>
        <svg width="16" height="14" viewBox="0 0 16 14" className="mr-[9px]">
          <path d="M1 4.500h2L7 1v12L3 9.500H1z" fill="#eef2f6" stroke="#4b5a6d" strokeWidth=".6" />
          <path d="M10 4c1.500 2 1.500 4 0 6M12.500 2.500c2.500 3 2.500 6 0 9" stroke="#eef2f6" fill="none" />
        </svg>
        <svg width="16" height="16" viewBox="0 0 16 16" className="mr-[10px]">
          <rect x="3.500" y="4.500" width="12" height="9" fill="#51627a" stroke="#eef2f6" />
          <path d="M9 14v2M5 15.500h9" stroke="#eef2f6" />
          <rect x="0.500" y="0.500" width="4" height="7" fill="#eef2f6" />
        </svg>
        <div className="w-[76px] flex flex-col items-center leading-[16px] pt-[1px]">
          <span>10:44 a.m.</span>
          <span>09/12/2011</span>
        </div>
        <div className="ml-[2px] w-[14px] h-[38px] border border-[#5a6a7e] bg-[linear-gradient(90deg,#8c9bad,#6e7f94)]" />
      </div>
    </div>
  )
}

export default function App() {
  return (
    <div className={`${ui} w-[1280px] h-[1024px] flex flex-col overflow-hidden bg-[#e1e5ea] text-[#222]`}>
      <div className="h-[24px] shrink-0 grid grid-cols-[1fr_auto_1fr] items-center bg-[linear-gradient(180deg,#eceef1,#dfe3e7)] text-[11.5px] text-[#3d4650]">
        <div className="flex items-center">
          <div className="ml-[1px]"><ExcelLogo /></div>
          <div className="ml-[3px] w-px h-[16px] bg-[#9ba2aa]" />
          <div className="ml-[5px]"><SaveIcon /></div>
          <div className="ml-[8px]"><UndoIcon color="#3f78c8" /></div>
          <Caret className="ml-[4px]" />
          <div className="ml-[7px]"><UndoIcon color="#b5bec8" /></div>
          <Caret className="ml-[4px]" />
          <div className="ml-[5px] w-px h-[16px] bg-[#9ba2aa]" />
          <svg width="7" height="7" viewBox="0 0 7 7" className="ml-[5px]"><path d="M0 0h7v1H0zM0 3h7L3.500 7z" fill="#333" /></svg>
        </div>
        <div className="whitespace-pre">volumen terraplén  [Modo de compatibilidad]  -  Microsoft Excel</div>
        <div className="flex items-center justify-end pr-[11px]">
          <div className="w-[11px] h-[5px] rounded-[1px] border border-[#555f6b] bg-white" />
          <svg width="12" height="12" viewBox="0 0 12 12" className="ml-[24px]">
            <path d="M3.500 0.500h8v7h-8zM0.500 4.500h7v7h-7z" fill="#f4f6f8" stroke="#555f6b" />
          </svg>
          <svg width="12" height="11" viewBox="0 0 12 11" className="ml-[23px]">
            <path d="M1 1l10 9M11 1L1 10" stroke="#555f6b" strokeWidth="2.200" />
          </svg>
        </div>
      </div>

      <div className="h-[24px] shrink-0 flex items-stretch bg-[linear-gradient(180deg,#dfe3e7,#e4e7eb)] text-[11.5px] text-[#444c56] border-b border-[#b3b8bf]">
        <div className="ml-px w-[55px] mt-[1px] rounded-t-[3px] bg-[linear-gradient(180deg,#3d9a48,#1f7a33)] border border-[#2b6a36] text-center leading-[21px] text-white">Archivo</div>
        <div className="ml-[5px] w-[53px] -mb-px rounded-t-[3px] border border-b-0 border-[#b3b8bf] bg-[#fbfbfc] text-center leading-[23px] text-[#333]">Inicio</div>
        <div className="w-[67px] text-center leading-[23px]">Insertar</div>
        <div className="w-[119px] text-center leading-[23px]">Diseño de página</div>
        <div className="w-[75px] text-center leading-[23px]">Fórmulas</div>
        <div className="w-[58px] text-center leading-[23px]">Datos</div>
        <div className="w-[64px] text-center leading-[23px]">Revisar</div>
        <div className="w-[53px] text-center leading-[23px]">Vista</div>
        <div className="w-[105px] text-center leading-[23px]">Complementos</div>
        <div className="ml-auto flex items-center pr-[4px]">
          <svg width="9" height="8" viewBox="0 0 9 8"><path d="M0.500 4L4.500 0.500 8.500 4M0.500 7.500L4.500 4l4 3.500" stroke="#555f6b" fill="none" /></svg>
          <div className="ml-[9px] w-[16px] h-[16px] rounded-full bg-[#2f7fd4] text-white font-bold text-[12px] leading-[16px] text-center">?</div>
          <div className="ml-[9px] w-[11px] h-[5px] rounded-[1px] border border-[#555f6b] bg-white" />
          <svg width="12" height="12" viewBox="0 0 12 12" className="ml-[10px]">
            <path d="M3.500 0.500h8v7h-8zM0.500 4.500h7v7h-7z" fill="#f4f6f8" stroke="#555f6b" />
          </svg>
          <svg width="11" height="10" viewBox="0 0 11 10" className="ml-[11px]">
            <path d="M1 1l9 8M10 1L1 9" stroke="#555f6b" strokeWidth="2" />
          </svg>
        </div>
      </div>

      <Ribbon />
      <FormulaBar />
      <Sheet />
      <SheetTabs />
      <StatusBar />
      <Taskbar />
    </div>
  )
}
